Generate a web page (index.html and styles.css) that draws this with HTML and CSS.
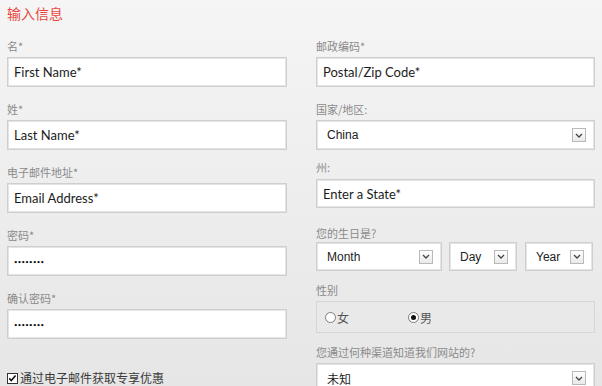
FILE: index.html
```html
<!DOCTYPE html>
<html lang="zh">
<head>
<meta charset="utf-8">
<title>输入信息</title>
<link rel="stylesheet" href="styles.css">
</head>
<body>
<div class="page">
  <h1 class="title">输入信息</h1>
  <div class="cols">
    <div class="col">
      <div class="field"><div class="label">名*</div><div class="box text">First Name*</div></div>
      <div class="field"><div class="label">姓*</div><div class="box text">Last Name*</div></div>
      <div class="field"><div class="label">电子邮件地址*</div><div class="box text">Email Address*</div></div>
      <div class="field"><div class="label">密码*</div><div class="box text pw">••••••••</div></div>
      <div class="field"><div class="label">确认密码*</div><div class="box text pw">••••••••</div></div>
      <div class="optin">
        <svg class="check" width="11" height="11" viewBox="0 0 11 11"><rect x="0.5" y="0.5" width="10" height="10" fill="#fff" stroke="#333"/><path d="M2.3 5.4 L4.3 7.6 L8.6 2.6" fill="none" stroke="#111" stroke-width="1.6"/></svg>
        <span>通过电子邮件获取专享优惠</span>
      </div>
    </div>
    <div class="col">
      <div class="field"><div class="label">邮政编码*</div><div class="box text">Postal/Zip Code*</div></div>
      <div class="field f-country"><div class="label">国家/地区:</div>
        <div class="box select"><span>China</span><span class="arrow"><svg width="8" height="5" viewBox="0 0 8 5"><path d="M1 1 L4 4 L7 1" fill="none" stroke="#444" stroke-width="1.3"/></svg></span></div>
      </div>
      <div class="field f-state"><div class="label">州:</div><div class="box text short">Enter a State*</div></div>
      <div class="field f-birth"><div class="label">您的生日是?</div>
        <div class="birth">
          <div class="box select short month"><span>Month</span><span class="arrow"><svg width="8" height="5" viewBox="0 0 8 5"><path d="M1 1 L4 4 L7 1" fill="none" stroke="#444" stroke-width="1.3"/></svg></span></div>
          <div class="box select short small"><span>Day</span><span class="arrow"><svg width="8" height="5" viewBox="0 0 8 5"><path d="M1 1 L4 4 L7 1" fill="none" stroke="#444" stroke-width="1.3"/></svg></span></div>
          <div class="box select short small"><span>Year</span><span class="arrow"><svg width="8" height="5" viewBox="0 0 8 5"><path d="M1 1 L4 4 L7 1" fill="none" stroke="#444" stroke-width="1.3"/></svg></span></div>
        </div>
      </div>
      <div class="field f-gender"><div class="label">性别</div>
        <div class="gender">
          <span class="opt"><span class="radio"></span>女</span>
          <span class="opt"><span class="radio on"></span>男</span>
        </div>
      </div>
      <div class="field"><div class="label">您通过何种渠道知道我们网站的?</div>
        <div class="box select cjk"><span>未知</span><span class="arrow"><svg width="8" height="5" viewBox="0 0 8 5"><path d="M1 1 L4 4 L7 1" fill="none" stroke="#444" stroke-width="1.3"/></svg></span></div>
      </div>
    </div>
  </div>
</div>
</body>
</html>
```

FILE: styles.css
```css
html, body {
  margin: 0;
  height: 100%;
}
body {
  background: linear-gradient(#f5f5f5, #e6e6e6);
  font-family: "Noto Sans CJK SC", "Liberation Sans", sans-serif;
  overflow: hidden;
}
.page {
  padding: 5px 7px 0 7px;
}
.title {
  margin: 0 0 18px 0;
  font-size: 14px;
  line-height: 16px;
  font-weight: normal;
  color: #e8473d;
}
.cols {
  display: grid;
  grid-template-columns: 280px 279px;
  column-gap: 29px;
}
.col {
  display: flex;
  flex-direction: column;
}
.field {
  margin-bottom: 15px;
}
.label {
  font-size: 11px;
  line-height: 14px;
  height: 14px;
  color: #8a8a8a;
  margin-bottom: 4px;
  white-space: nowrap;
}
.box {
  box-sizing: border-box;
  height: 30px;
  background: #fff;
  border: 1px solid #cfcfcf;
  box-shadow: inset 0 0 0 1px #e4e4e4;
}
.box.short {
  height: 29px;
}
.text {
  display: flex;
  align-items: center;
  padding-left: 6px;
  font-family: Lato, "Open Sans", sans-serif;
  font-size: 13px;
  color: #1c1c1c;
}
.pw {
  font-size: 6px;
  letter-spacing: 0.3px;
  padding-top: 1px;
  color: #111;
}
.select {
  display: flex;
  align-items: center;
  justify-content: space-between;
  padding: 0 8px 0 10px;
  font-family: "Liberation Sans", Arial, sans-serif;
  font-size: 12px;
  color: #222;
}
.select.cjk {
  font-family: "Noto Sans CJK SC", sans-serif;
}
.arrow {
  box-sizing: border-box;
  width: 14px;
  height: 14px;
  border: 1px solid #b9b9b9;
  background: linear-gradient(#ffffff, #e9e9e9);
  display: flex;
  align-items: center;
  justify-content: center;
}
.f-country {
  margin-bottom: 10px;
}
.f-state .label {
  margin-bottom: 5px;
}
.f-state {
  margin-bottom: 18px;
}
.f-birth .label {
  margin-bottom: 2px;
}
.f-birth {
  margin-bottom: 12px;
}
.birth {
  display: flex;
  gap: 8px;
}
.birth .month {
  width: 126px;
  margin-right: -1px;
}
.birth .small {
  width: 68px;
}
.f-gender {
  margin-bottom: 12px;
}
.gender {
  box-sizing: border-box;
  height: 32px;
  background: #e9e9e9;
  border: 1px solid #d6d6d6;
  display: flex;
  align-items: center;
  padding-left: 8px;
  font-size: 12px;
  color: #555;
}
.opt {
  display: flex;
  align-items: center;
  gap: 1px;
}
.opt:first-child {
  width: 83px;
}
.radio {
  box-sizing: border-box;
  width: 11px;
  height: 11px;
  border-radius: 50%;
  border: 1px solid #7a7a7a;
  background: #fff;
  display: flex;
  align-items: center;
  justify-content: center;
}
.radio.on::after {
  content: "";
  width: 5px;
  height: 5px;
  border-radius: 50%;
  background: #111;
}
.optin {
  margin-top: 17px;
  display: flex;
  align-items: center;
  gap: 2px;
  font-size: 12px;
  line-height: 14px;
  color: #3a3a3a;
}
.check {
  display: block;
}
```
